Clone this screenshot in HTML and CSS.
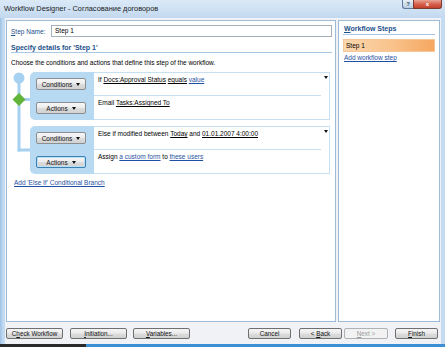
FILE: index.html
```html
<!DOCTYPE html>
<html>
<head>
<meta charset="utf-8">
<link rel="stylesheet" href="styles.css">
</head>
<body>
<div class="window">
  <div class="titlebar">
    <span class="title">Workflow Designer - Согласование договоров</span>
    <div class="tbtns">
      <span class="tb help">?</span>
      <span class="tb close">x</span>
    </div>
  </div>
  <div class="client">
    <div class="panels">
      <div class="main">
        <div class="namerow">
          <label class="lbl"><u>S</u>tep Name:</label>
          <div class="input">Step 1</div>
        </div>
        <div class="heading">Specify details for 'Step 1'</div>
        <div class="desc">Choose the conditions and actions that define this step of the workflow.</div>
        <div class="flow">
          <svg class="rail" width="19" height="102" viewBox="0 0 19 102">
            <rect x="6.5" y="6" width="3" height="73.5" fill="#a6d1f1"/>
            <rect x="6.5" y="76.5" width="12.5" height="3" fill="#a6d1f1"/>
            <rect x="6.5" y="26" width="12.5" height="3" fill="#a6d1f1"/>
            <circle cx="8" cy="6" r="5.5" fill="#a6d1f1"/>
            <polygon points="8,21 14.5,27.5 8,34 1.5,27.5" fill="#63b43a"/>
          </svg>
          <div class="branches">
            <div class="blk">
              <div class="blk-l">
                <div class="btn"><span>Conditions</span><span class="tri"></span></div>
                <div class="btn"><span>Actions</span><span class="tri"></span></div>
              </div>
              <div class="blk-r">
                <div class="row top">
                  <span class="txt">If <span class="ul">Docs:Approval Status</span> <span class="ul">equals</span> <span class="lnk">value</span></span>
                  <span class="dd"></span>
                </div>
                <div class="row">
                  <span class="txt">Email <span class="ul">Tasks:Assigned To</span></span>
                </div>
              </div>
            </div>
            <div class="blk">
              <div class="blk-l">
                <div class="btn"><span>Conditions</span><span class="tri"></span></div>
                <div class="btn focus"><span>Actions</span><span class="tri"></span></div>
              </div>
              <div class="blk-r">
                <div class="row top">
                  <span class="txt">Else if modified between <span class="ul">Today</span> and <span class="ul">01.01.2007 4:00:00</span></span>
                  <span class="dd"></span>
                </div>
                <div class="row">
                  <span class="txt">Assign <span class="lnk">a custom form</span> to <span class="lnk">these users</span></span>
                </div>
              </div>
            </div>
          </div>
        </div>
        <div class="addbranch"><span class="lnk">Add 'Else If' Conditional Branch</span></div>
      </div>
      <div class="side">
        <div class="sidehead"><u>W</u>orkflow Steps</div>
        <div class="stepsel">Step 1</div>
        <div class="addstep"><span class="lnk">Add workflow step</span></div>
      </div>
    </div>
    <div class="bottombar">
      <div class="bgroup">
        <div class="pbtn w57"><span>C<u>h</u>eck Workflow</span></div>
        <div class="pbtn w57 ml7"><span><u>I</u>nitiation...</span></div>
        <div class="pbtn w57 ml6"><span><u>V</u>ariables...</span></div>
      </div>
      <div class="bgroup">
        <div class="pbtn w43"><span>Cancel</span></div>
        <div class="pbtn w43 ml8"><span>&lt; <u>B</u>ack</span></div>
        <div class="pbtn w44 ml2 disabled"><span><u>N</u>ext &gt;</span></div>
        <div class="pbtn w43 ml7"><span><u>F</u>inish</span></div>
      </div>
    </div>
  </div>
  <div class="bottomstrip"><span class="dark"></span></div>
</div>
</body>
</html>
```
FILE: styles.css
```css
* { box-sizing: border-box; }
html, body { margin: 0; padding: 0; }
body {
  width: 445px; height: 347px; overflow: hidden;
  font-family: "Liberation Sans", Arial, sans-serif;
  font-size: 6.5px;
  color: #000;
}
.window {
  width: 445px; height: 347px;
  display: flex; flex-direction: column;
  background: linear-gradient(90deg, #9cc0e4 0px, #c3dbf2 3px, #cfe2f5 40%, #c4dbf1 100%);
}
.titlebar {
  height: 18px; flex: none;
  display: flex; justify-content: space-between; align-items: flex-start;
  background: linear-gradient(180deg, #dbe9f7 0%, #cde0f3 60%, #c2d8ef 100%);
}
.title {
  font-size: 7.4px; line-height: 17px; padding-left: 4px; color: #1b1b1b;
}
.tbtns { display: flex; margin-right: 3px; }
.tb {
  height: 9px; display: flex; align-items: center; justify-content: center;
  font-size: 6px; font-weight: bold; border: 1px solid #5c7a9a; border-top: 0;
}
.help {
  width: 11px; color: #304a66;
  background: linear-gradient(180deg, #e8eff7, #b9cde2);
  border-radius: 0 0 0 3px; border-right: 0;
}
.close {
  width: 29px; color: #fff;
  background: linear-gradient(180deg, #e9a596 0%, #d7634f 50%, #c3402c 100%);
  border-color: #7a3a30;
  border-radius: 0 0 3px 0;
}
.client {
  flex: 1; display: flex; flex-direction: column;
  margin: 0 4px 0 5px;
  background: #f0f2f5;
}
.panels {
  height: 304px; flex: none;
  display: flex; gap: 2px;
  padding: 2px 1px 0 1px;
}
.main {
  width: 330px; height: 302px;
  background: #fff; border: 1px solid #9dbcd9;
  padding: 4px 3px 0 4px;
}
.namerow { display: flex; height: 12px; align-items: center; }
.lbl { width: 40px; color: #1c4f8a; }
.input {
  width: 281px; height: 12px; border: 1px solid #a6b0bb;
  padding-left: 3px; line-height: 10px; background: #fff;
}
.heading {
  margin-top: 7px; line-height: 8px; height: 9px;
  font-weight: bold; font-size: 7px; color: #1c4f8a;
  border-bottom: 1px solid #a8c8e6;
}
.desc { margin-top: 6px; line-height: 8px; }
.flow { display: flex; margin-top: 5px; }
.rail { flex: none; display: block; }
.branches { width: 300px; display: flex; flex-direction: column; gap: 6px; }
.blk { display: flex; height: 48px; }
.blk-l {
  width: 64px; flex: none;
  background: #b7d9f1;
  border-radius: 5px 0 0 5px;
  display: flex; flex-direction: column; justify-content: space-around;
  padding-left: 6px;
}
.btn {
  width: 50px; height: 12px;
  border: 1px solid #8b8e91; border-radius: 2px;
  background: linear-gradient(180deg, #f7f7f7 0%, #ebebeb 48%, #dcdcdc 52%, #d2d2d2 100%);
  display: flex; align-items: center; justify-content: center; gap: 4px;
  font-size: 6.5px; color: #111;
}
.btn.focus {
  border-color: #3c7fb1;
  box-shadow: inset 0 0 0 1px #b8e0f6;
}
.tri {
  width: 0; height: 0;
  border-left: 2.5px solid transparent; border-right: 2.5px solid transparent;
  border-top: 3px solid #111;
}
.blk-r {
  flex: 1; border: 1px solid #c6e0f2; border-left: 0;
  display: flex; flex-direction: column;
}
.row { height: 23px; padding: 3px 0 0 4px; line-height: 7px; }
.row.top {
  display: flex; justify-content: space-between;
  border-bottom: 1px solid #c6e0f2; margin-right: 8px;
  position: relative;
}
.dd {
  position: absolute; right: -7px; top: 3px;
  width: 0; height: 0;
  border-left: 2.5px solid transparent; border-right: 2.5px solid transparent;
  border-top: 3px solid #111;
}
.ul { text-decoration: underline; }
.lnk { color: #1f4fa0; text-decoration: underline; }
.addbranch { margin-top: 5px; padding-left: 3px; line-height: 8px; }
.side {
  width: 102px; height: 302px;
  background: #fff; border: 1px solid #9dbcd9;
  padding: 4px 4px 0 4px;
}
.sidehead {
  font-weight: bold; font-size: 7px; color: #1c4f8a; line-height: 8px;
  padding-left: 1px; height: 10px;
  border-bottom: 1px solid #a8c8e6;
}
.stepsel {
  margin-top: 4px; height: 13px; line-height: 12px; padding-left: 2px;
  background: linear-gradient(90deg, #fcd7ae 0%, #f9c48e 50%, #f5a861 100%);
  border: 1px solid #f3c79a;
}
.addstep { margin-top: 2px; padding-left: 1px; line-height: 8px; }
.bottombar {
  flex: 1; display: flex; justify-content: space-between;
  padding: 6px 3px 0 1px;
}
.bgroup { display: flex; }
.pbtn {
  height: 11px; border: 1px solid #707070; border-radius: 2px;
  background: linear-gradient(180deg, #f4f4f4 0%, #ebebeb 48%, #dddddd 52%, #d0d0d0 100%);
  display: flex; align-items: center; justify-content: center;
  font-size: 6.3px; color: #111;
}
.pbtn.disabled { color: #9a9a9a; border-color: #adb2b5; background: #f2f2f2; }
.w57 { width: 57px; }
.w43 { width: 43px; }
.w44 { width: 44px; }
.ml7 { margin-left: 7px; }
.ml6 { margin-left: 6px; }
.ml8 { margin-left: 8px; }
.ml2 { margin-left: 2px; }
.bottomstrip { height: 3px; flex: none; background: #3b8fd2; display: flex; }
.dark { width: 86px; background: #2a2a2a; }
```
